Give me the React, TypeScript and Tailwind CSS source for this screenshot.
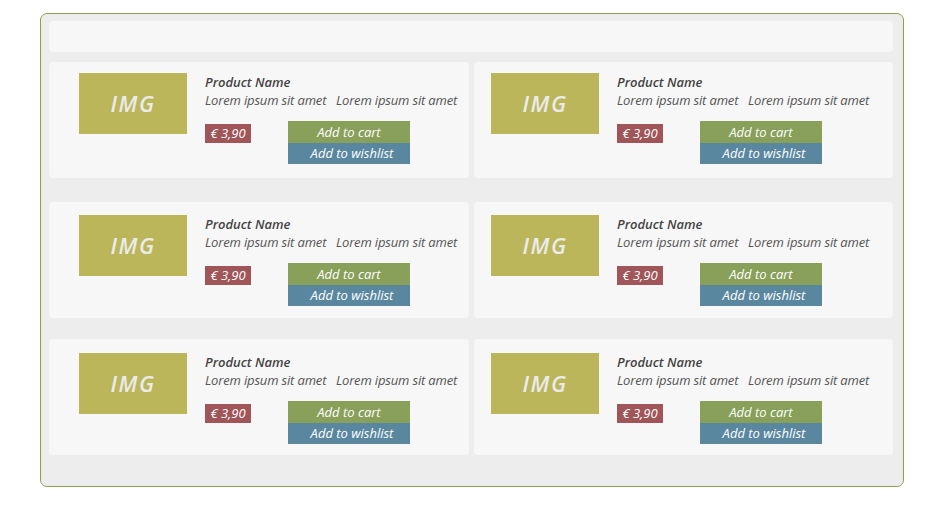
import React from "react";

function Card({ padLeft, padTop }: { padLeft: string; padTop: string }) {
  return (
    <div className={`bg-[#f7f7f7] rounded-[4px] h-[116px] flex items-start ${padTop} ${padLeft}`}>
      <div className="w-[108px] h-[61px] bg-[#bbb65a] flex items-center justify-center shrink-0">
        <span className="italic font-semibold text-[22px] text-[#ebebeb] tracking-[1.5px]" style={{ fontFamily: '"Open Sans", sans-serif' }}>IMG</span>
      </div>
      <div className="ml-[18px] flex flex-col" style={{ fontFamily: '"Open Sans", sans-serif' }}>
        <div className="italic font-semibold text-[13px] leading-[18px] text-[#444]">Product Name</div>
        <div className="italic text-[13px] leading-[18px] text-[#555] whitespace-pre tracking-[-0.16px]">Lorem ipsum sit amet   Lorem ipsum sit amet</div>
        <div className="flex items-start mt-[12px]">
          <div className="mt-[3px] w-[46px] h-[19px] bg-[#a05558] text-white italic text-[13px] leading-[19px] text-center">€ 3,90</div>
          <div className="ml-[37px] flex flex-col w-[122px]">
            <div className="h-[22px] bg-[#88a05a] text-white italic text-[13px] leading-[22px] text-center">Add to cart</div>
            <div className="h-[21px] bg-[#5a87a0] text-white italic text-[13px] leading-[21px] text-center pl-[6px]">Add to wishlist</div>
          </div>
        </div>
      </div>
    </div>
  );
}

function Row({ className, padTop }: { className: string; padTop: string }) {
  return (
    <div className={`grid grid-cols-[420px_419px] gap-x-[5px] ${className}`}>
      <Card padLeft="pl-[30px]" padTop={padTop} />
      <Card padLeft="pl-[17px]" padTop={padTop} />
    </div>
  );
}

export default function App() {
  return (
    <div className="w-[940px] h-[512px] bg-white pt-[13px] pl-[40px]">
      <div className="w-[864px] h-[474px] border border-[#8aa24e] rounded-[7px] bg-[#ededed] pt-[7px] pl-[8px]">
        <div className="w-[844px] h-[31px] bg-[#f7f7f7] rounded-[4px]" />
        <Row className="mt-[10px]" padTop="pt-[11px]" />
        <Row className="mt-[24px]" padTop="pt-[13px]" />
        <Row className="mt-[21px]" padTop="pt-[14px]" />
      </div>
    </div>
  );
}
